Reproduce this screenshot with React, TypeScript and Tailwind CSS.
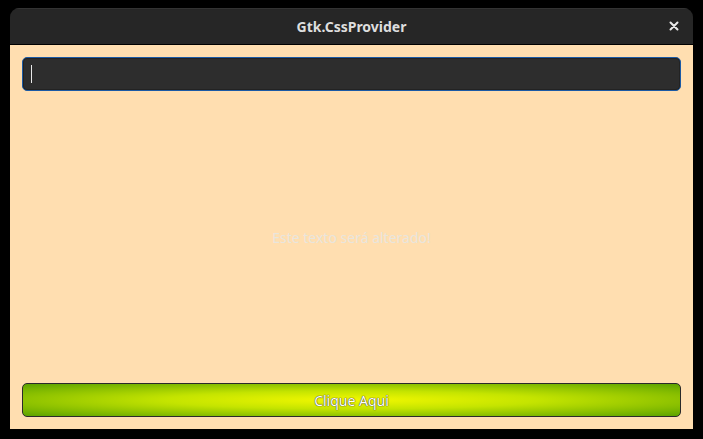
export default function App() {
  return (
    <div className="w-[703px] h-[439px] bg-black pt-[8px] px-[10px] pb-[10px] flex" style={{ fontFamily: '"Noto Sans", "Open Sans", sans-serif' }}>
      <div className="flex-1 flex flex-col rounded-t-[9px] overflow-hidden">
        <div className="h-[37px] bg-[#262626] border-b border-black relative flex items-center justify-center shadow-[inset_0_1px_0_#333]">
          <span className="text-[#dedede] text-[14px] font-bold">Gtk.CssProvider</span>
          <svg className="absolute right-[14px] top-[13px]" width="10" height="10" viewBox="0 0 10 10">
            <path d="M1.5 1.5 L8.5 8.5 M8.5 1.5 L1.5 8.5" stroke="#e8e8e8" strokeWidth="2" strokeLinecap="round" />
          </svg>
        </div>
        <div className="flex-1 bg-[#ffdeb0] p-[12px] flex flex-col">
          <div className="h-[34px] rounded-[5px] border border-[#1b5aa5] bg-[#2d2d2d] shadow-[inset_0_0_0_1px_#222] flex items-center pl-[8px]">
            <div className="w-[1px] h-[18px] bg-[#e8e8e8]" />
          </div>
          <div className="flex-1 flex items-center justify-center">
            <span className="text-[#e9e5dd] text-[14px]">Este texto será alterado!</span>
          </div>
          <button className="h-[34px] rounded-[5px] border border-[#2a2a2a] bg-[radial-gradient(ellipse_at_center,#f2f800_0%,#c4e400_40%,#5ba200_100%)] text-white text-[14px] [text-shadow:0_0_1px_#333,0_0_1px_#333]">
            Clique Aqui
          </button>
        </div>
      </div>
    </div>
  )
}
